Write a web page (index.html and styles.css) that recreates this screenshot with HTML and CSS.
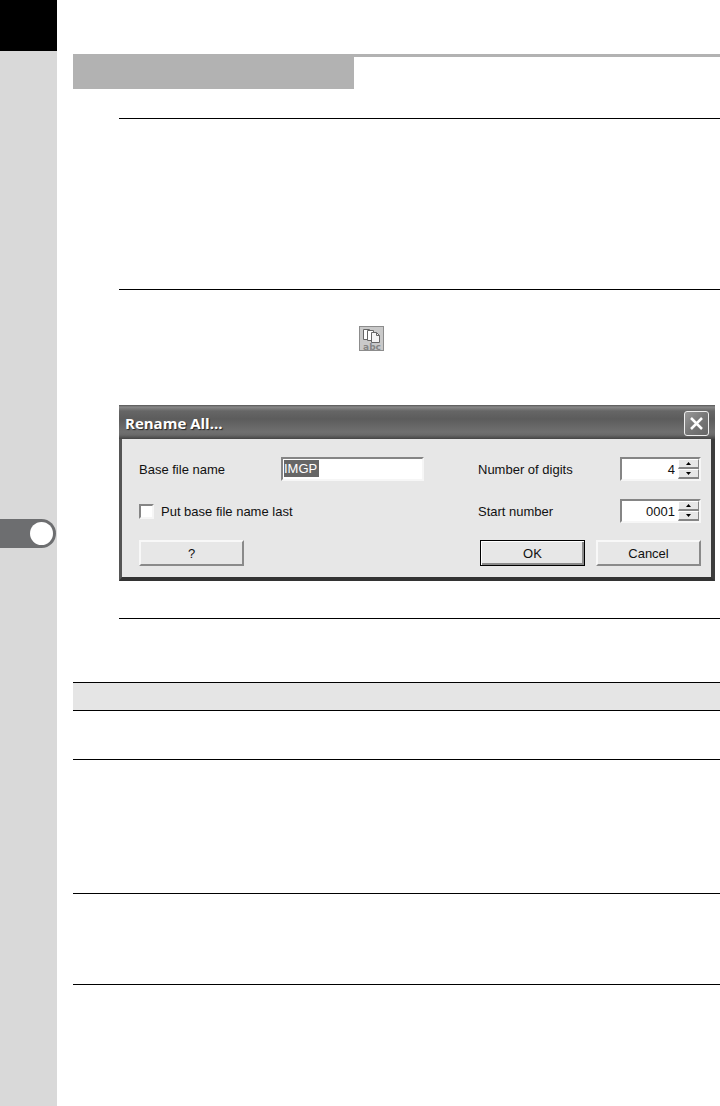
FILE: index.html
```html
<!DOCTYPE html>
<html lang="en">
<head>
    <meta charset="UTF-8">
    <meta name="viewport" content="width=device-width, initial-scale=1.0">
    <title>Rename All</title>
    <link rel="stylesheet" href="styles.css">
</head>
<body>

    <!-- Chapter strip -->
    <aside class="sidebar">
        <div class="sidebar-top"></div>
        <div class="chapter-tab"><span class="chapter-dot"></span></div>
    </aside>

    <main class="page">
        <header class="page-header">
            <div class="page-title"></div>
        </header>

        <section class="step step-intro"></section>

        <section class="step step-rename">
            <div class="tool-icon">
                <svg width="25" height="25" viewBox="0 0 25 25">
                    <rect x="0.500" y="0.500" width="24" height="24" fill="#c9c9c9" stroke="#8c8c8c" stroke-width="1"/>
                    <g stroke="#666" stroke-width="1">
                        <path d="M4.500 3.500h6v10h-6z" fill="#fff"/>
                        <path d="M8.500 4.500h6v10h-6z" fill="#fff"/>
                        <path d="M12.500 6.500h5l3 3v7h-8z" fill="#f4f4f4"/>
                        <path d="M17.500 6.500v3h3" fill="none"/>
                    </g>
                    <text class="tool-text" x="13" y="24" text-anchor="middle">abc</text>
                </svg>
            </div>

            <!-- Dialog window -->
            <form class="dialog">
                <div class="title-bar">
                    <h1 class="dialog-title">Rename All...</h1>
                    <button type="button" class="close-btn" aria-label="Close">
                        <svg width="25" height="25" viewBox="0 0 25 25">
                            <path d="M7 7L18 18M18 7L7 18" stroke="#fff" stroke-width="2.500" fill="none"/>
                        </svg>
                    </button>
                </div>

                <div class="dialog-body">
                    <div class="fields">
                        <label for="base-name">Base file name</label>
                        <div class="text-box">
                            <input type="text" class="base-name" id="base-name" value="IMGP">
                        </div>
                        <label class="right-label" for="digits">Number of digits</label>
                        <div class="spinner">
                            <input type="text" id="digits" value="4">
                            <div class="arrows">
                                <button type="button" aria-label="More digits"><svg width="5" height="3" viewBox="0 0 5 3"><path d="M0 3L2.500 0L5 3z"/></svg></button>
                                <button type="button" aria-label="Fewer digits"><svg width="5" height="3" viewBox="0 0 5 3"><path d="M0 0L2.500 3L5 0z"/></svg></button>
                            </div>
                        </div>

                        <label class="check-label">
                            <input type="checkbox" class="check">
                            Put base file name last
                        </label>
                        <label class="right-label" for="start">Start number</label>
                        <div class="spinner">
                            <input type="text" id="start" value="0001">
                            <div class="arrows">
                                <button type="button" aria-label="Increase start number"><svg width="5" height="3" viewBox="0 0 5 3"><path d="M0 3L2.500 0L5 3z"/></svg></button>
                                <button type="button" aria-label="Decrease start number"><svg width="5" height="3" viewBox="0 0 5 3"><path d="M0 0L2.500 3L5 0z"/></svg></button>
                            </div>
                        </div>
                    </div>

                    <div class="buttons">
                        <button type="button" class="btn help-btn">?</button>
                        <button type="button" class="btn ok-btn">OK</button>
                        <button type="button" class="btn">Cancel</button>
                    </div>
                </div>
            </form>
        </section>

        <section class="step step-end"></section>

        <div class="notes">
            <div class="notes-head"></div>
            <div class="notes-row row-small"></div>
            <div class="notes-row row-large"></div>
            <div class="notes-row row-medium"></div>
        </div>
    </main>

</body>
</html>
```
FILE: styles.css
```css
/* General Styles */
* {
    box-sizing: border-box;
}

body {
    margin: 0;
    min-height: 100vh;
    display: flex;
    background-color: #fff;
    color: #111;
    font-family: "Liberation Sans", Arial, sans-serif;
    font-size: 13px;
}

button,
input {
    font: inherit;
    color: inherit;
    margin: 0;
    padding: 0;
    border-radius: 0;
}

/* Chapter strip */
.sidebar {
    flex: 0 0 57px;
    background-color: #d9d9d9;
}

.sidebar-top {
    height: 51px;
    background-color: #000;
}

.chapter-tab {
    display: flex;
    align-items: center;
    justify-content: flex-end;
    height: 29px;
    margin-top: 468px;
    margin-right: 1px;
    padding-right: 3px;
    background-color: #6d6e70;
    border-radius: 0 15px 15px 0;
}

.chapter-dot {
    width: 23px;
    height: 23px;
    border-radius: 50%;
    background-color: #fff;
}

/* Page */
.page {
    flex: 1;
    min-width: 0;
    padding: 54px 0 0 16px;
}

.page-header {
    border-top: 3px solid #b2b2b2;
    margin-bottom: 29px;
}

.page-title {
    width: 281px;
    height: 32px;
    background-color: #b2b2b2;
}

.step {
    margin-left: 46px;
    border-top: 1px solid #000;
}

.step-intro {
    min-height: 171px;
}

.step-rename {
    padding: 36px 5px 37px 0;
}

.step-end {
    min-height: 64px;
}

.tool-icon {
    display: flex;
    padding-left: 240px;
    margin-bottom: 54px;
}

.tool-text {
    font-family: "DejaVu Sans", sans-serif;
    font-size: 9px;
    font-weight: bold;
    fill: #858585;
}

/* Dialog window */
.dialog {
    background-color: #e7e7e7;
    border: 3px solid #555;
    border-top: 0;
    border-right: 4px solid #3c3c3c;
    border-bottom: 4px solid #333;
}

.title-bar {
    display: flex;
    align-items: center;
    justify-content: space-between;
    height: 34px;
    margin: 0 -4px 0 -3px;
    padding: 2px 6px 0;
    background: linear-gradient(#555 0, #888 2px, #666 6px, #5c5c5c 14px, #707070 27px, #696969 30px, #444 34px);
}

.dialog-title {
    margin: 0;
    font-family: "Open Sans", "Noto Sans", sans-serif;
    font-size: 15px;
    line-height: 20px;
    color: #fff;
    text-shadow: 1px 1px 1px #222;
}

.close-btn {
    display: flex;
    width: 25px;
    height: 25px;
    border: 1px solid #eee;
    border-radius: 3px;
    background: linear-gradient(135deg, #999, #777 50%, #666);
    align-items: center;
    justify-content: center;
}

.close-btn svg {
    flex: none;
}

.dialog-body {
    padding: 18px 10px 11px 17px;
}

.fields {
    display: grid;
    grid-template-columns: 142px 143px 1fr 81px;
    grid-auto-rows: 24px;
    row-gap: 18px;
    align-items: center;
}

.right-label {
    padding-left: 54px;
}

.text-box,
.spinner {
    display: flex;
    height: 24px;
    border: 2px solid #858585;
    border-right-color: #f6f6f6;
    border-bottom-color: #f6f6f6;
    background-color: #fff;
}

.text-box input,
.spinner input {
    min-width: 0;
    height: 20px;
    border: 0;
    outline: 0;
    background: transparent;
}

.text-box input {
    /* selected text */
    width: 35px;
    height: 17px;
    margin: 1px;
    background-color: #666;
    color: #fff;
}

.spinner input {
    flex: 1;
    text-align: right;
    padding-right: 3px;
}

.arrows {
    display: flex;
    flex-direction: column;
    flex: 0 0 21px;
}

.arrows button {
    display: flex;
    flex: 1;
    align-items: center;
    justify-content: center;
    border: 1px solid #fff;
    border-right-color: #858585;
    border-bottom: 2px solid #858585;
    background-color: #e7e7e7;
}

.check-label {
    grid-column: span 2;
    display: flex;
    align-items: center;
    gap: 7px;
}

.check {
    appearance: none;
    width: 15px;
    height: 15px;
    border: 2px solid #858585;
    border-right-color: #f6f6f6;
    border-bottom-color: #f6f6f6;
    background-color: #fff;
}

/* Dialog buttons */
.buttons {
    display: flex;
    gap: 11px;
    margin-top: 17px;
}

.btn {
    width: 105px;
    height: 26px;
    border: 2px solid #f8f8f8;
    border-right-color: #8a8a8a;
    border-bottom-color: #8a8a8a;
    background-color: #e7e7e7;
}

.help-btn {
    margin-right: auto;
}

.ok-btn {
    border: 1px solid #000;
    box-shadow: inset 1px 1px #fff, inset -2px -2px #8a8a8a;
}

/* Notes table */
.notes {
    border-top: 1px solid #000;
}

.notes-head {
    height: 28px;
    background-color: #e5e5e5;
    border-bottom: 1px solid #000;
}

.notes-row {
    border-bottom: 1px solid #000;
}

.row-small {
    min-height: 49px;
}

.row-large {
    min-height: 134px;
}

.row-medium {
    min-height: 91px;
}
```
